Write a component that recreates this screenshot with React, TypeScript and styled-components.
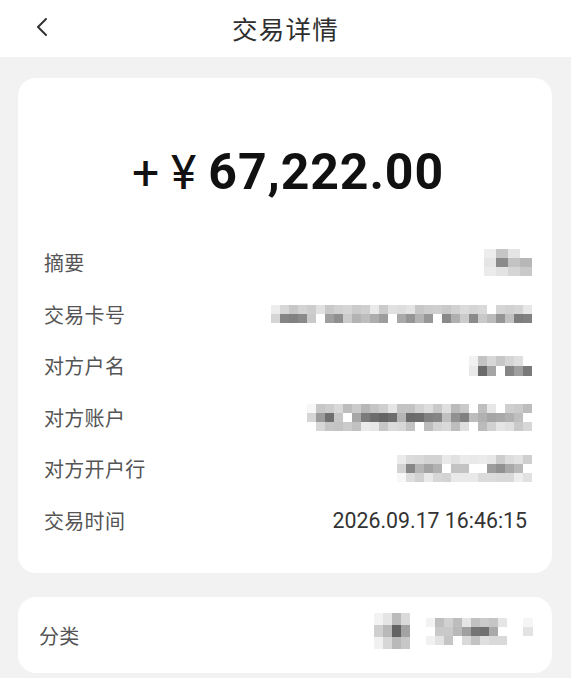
import React from "react";
import styled, { createGlobalStyle } from "styled-components";

const GlobalStyle = createGlobalStyle`
  html, body {
    margin: 0;
    padding: 0;
    background: #f2f2f2;
  }
  body {
    font-family: "Noto Sans CJK SC", "Noto Sans", sans-serif;
    -webkit-font-smoothing: antialiased;
  }
`;

const Page = styled.div`
  width: 571px;
  min-height: 678px;
  background: #f2f2f2;
  overflow: hidden;
`;

const Header = styled.header`
  height: 57px;
  background: #fff;
  display: grid;
  grid-template-columns: 1fr auto 1fr;
  align-items: center;
  padding: 0 0 0 34px;
  box-sizing: border-box;
`;

const BackButton = styled.button`
  justify-self: start;
  border: 0;
  background: none;
  padding: 0;
  width: 16px;
  height: 22px;
  margin-top: -4px;
  display: flex;
  align-items: center;
  justify-content: center;
  color: #333;
`;

const Title = styled.h1`
  margin: 0 0 3px;
  font-size: 25.5px;
  font-weight: 400;
  color: #2e2e2e;
  letter-spacing: 1.2px;
  transform: translateX(-17px);
`;

const Main = styled.main`
  padding: 21px 19px 0 18px;
  display: flex;
  flex-direction: column;
  gap: 24px;
`;

const Card = styled.section<{ $pad: string }>`
  background: #fff;
  border-radius: 18px;
  padding: ${(p) => p.$pad};
`;

const Amount = styled.div`
  height: 60px;
  margin: 64px 0 35px;
  display: flex;
  align-items: center;
  justify-content: center;
  font-family: Roboto, "Liberation Sans", sans-serif;
  color: #111;
`;

const Sign = styled.span`
  font-size: 48px;
  font-weight: 400;
  margin-right: 12px;
`;

const Number = styled.span`
  font-size: 50px;
  font-weight: 700;
  letter-spacing: 0.9px;
`;

const Row = styled.div<{ $h: number }>`
  height: ${(p) => p.$h}px;
  display: flex;
  align-items: center;
  justify-content: space-between;
`;

const Label = styled.span`
  font-size: 20px;
  color: #555;
  letter-spacing: 0.3px;
`;

const Value = styled.span`
  font-family: Roboto, "Liberation Sans", sans-serif;
  font-size: 21.3px;
  color: #333;
  margin-right: 5px;
`;

const MosaicGrid = styled.div<{ $cols: number; $cell: number; $rows: number }>`
  display: grid;
  grid-template-columns: repeat(${(p) => p.$cols}, ${(p) => p.$cell}px);
  grid-auto-rows: ${(p) => p.$rows}px;
  filter: blur(0.4px);
`;

// pixelated, redacted value
const Mosaic: React.FC<{
  cols: number;
  rows: number;
  cell: number;
  rowH: number;
  seed: number;
  dark?: number;
}> = ({ cols, rows, cell, rowH, seed, dark = 0.5 }) => {
  let s = seed;
  const rnd = () => {
    s = (s * 9301 + 49297) % 233280;
    return s / 233280;
  };
  const cells: number[] = [];
  for (let r = 0; r < rows; r++) {
    const middle = rows === 1 || r === Math.floor(rows / 2);
    for (let c = 0; c < cols; c++) {
      const v = rnd();
      let a = 0;
      if (v > 0.12) a = middle ? 0.2 + v * dark : 0.06 + v * dark * 0.5;
      if (c === 0) a *= 0.4;
      cells.push(Math.min(a, 0.8));
    }
  }
  return (
    <MosaicGrid $cols={cols} $cell={cell} $rows={rowH}>
      {cells.map((a, i) => (
        <div key={i} style={{ background: `rgba(55,55,55,${a.toFixed(2)})` }} />
      ))}
    </MosaicGrid>
  );
};

const CategoryValue = styled.div`
  display: flex;
  align-items: center;
  gap: 16px;
  margin-top: -8px;
`;

const rows = [
  { label: "摘要", mosaic: { cols: 4, rows: 3, cell: 12, rowH: 9, seed: 11, dark: 0.5 } },
  { label: "交易卡号", mosaic: { cols: 29, rows: 2, cell: 9, rowH: 9, seed: 37, dark: 0.45 } },
  { label: "对方户名", mosaic: { cols: 7, rows: 2, cell: 9, rowH: 10, seed: 5, dark: 0.55 } },
  { label: "对方账户", mosaic: { cols: 25, rows: 3, cell: 9, rowH: 9, seed: 73, dark: 0.6 } },
  { label: "对方开户行", mosaic: { cols: 15, rows: 3, cell: 9, rowH: 9, seed: 19, dark: 0.4 } },
];

const App: React.FC = () => {
  return (
    <Page>
      <GlobalStyle />
      <Header>
        <BackButton aria-label="返回">
          <svg width="14" height="20" viewBox="0 0 14 20" fill="none">
            <polyline
              points="11,2 3,10 11,18"
              stroke="#333"
              strokeWidth="2"
              strokeLinecap="round"
              strokeLinejoin="round"
            />
          </svg>
        </BackButton>
        <Title>交易详情</Title>
        <span />
      </Header>
      <Main>
        <Card $pad="0 20px 27px 26px">
          <Amount>
            <Sign>+ ¥</Sign>
            <Number>67,222.00</Number>
          </Amount>
          {rows.map((r) => (
            <Row key={r.label} $h={51.5}>
              <Label>{r.label}</Label>
              <Mosaic {...r.mosaic} />
            </Row>
          ))}
          <Row $h={51.5}>
            <Label>交易时间</Label>
            <Value>2026.09.17 16:46:15</Value>
          </Row>
        </Card>
        <Card $pad="0 19px 0 21px">
          <Row $h={76}>
            <Label>分类</Label>
            <CategoryValue>
              <Mosaic cols={4} rows={3} cell={9} rowH={12} seed={3} dark={0.6} />
              <Mosaic cols={9} rows={3} cell={9} rowH={9} seed={29} dark={0.55} />
              <Mosaic cols={1} rows={3} cell={10} rowH={9} seed={7} dark={0.25} />
            </CategoryValue>
          </Row>
        </Card>
      </Main>
    </Page>
  );
};

export default App;
